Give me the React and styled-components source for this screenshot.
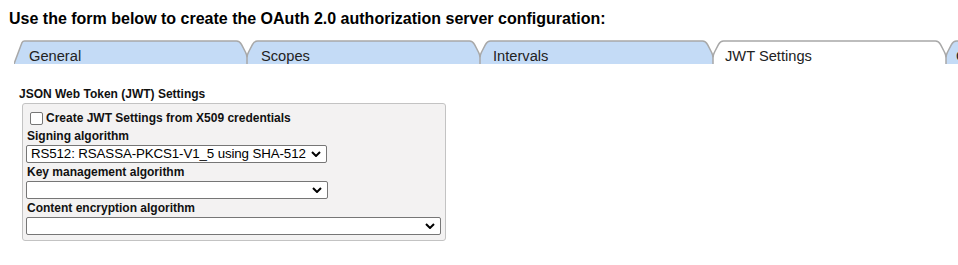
import React from "react";
import styled, { createGlobalStyle } from "styled-components";

const GlobalStyle = createGlobalStyle`
  html, body {
    margin: 0;
    padding: 0;
    background: #fff;
  }
  body {
    font-family: "Liberation Sans", Arial, sans-serif;
    color: #000;
  }
`;

const Page = styled.div`
  width: 958px;
  height: 265px;
  overflow: hidden;
  padding-top: 9px;
  box-sizing: border-box;
`;

const Heading = styled.h1`
  margin: 0 0 0 9px;
  font-size: 16px;
  line-height: 20px;
  font-weight: bold;
  color: #000;
  white-space: nowrap;
`;

const TabStrip = styled.div`
  display: flex;
  margin: 11px 0 0 14px;
  height: 24px;
`;

const Tab = styled.div`
  position: relative;
  flex: none;
  width: 233px;
  height: 24px;
  box-sizing: border-box;
  padding: 8px 0 0 ${(p) => p.$inset}px;
  overflow: hidden;
  z-index: ${(p) => (p.$active ? 2 : 1)};
  font-size: 14.67px;
  line-height: 16px;
  color: #222;
  white-space: nowrap;
`;

const TabShape = styled.svg`
  position: absolute;
  left: 0;
  top: 0;
  width: 233px;
  height: 24px;
  overflow: visible;
`;

const TabLabel = styled.span`
  position: relative;
`;

const Section = styled.section`
  margin: 23px 0 0 19px;
`;

const SectionTitle = styled.div`
  font-size: 12px;
  font-weight: bold;
  line-height: 14px;
  color: #111;
`;

const Box = styled.div`
  margin: 2px 0 0 3px;
  width: 424px;
  box-sizing: border-box;
  background: #f3f2f2;
  border: 1px solid #c3c3c3;
  border-radius: 3px;
  padding: 4px 4px 4px 3px;
`;

const CheckRow = styled.label`
  display: flex;
  align-items: center;
  height: 20px;
  font-size: 12px;
  font-weight: bold;
  color: #111;
`;

const Check = styled.input`
  appearance: none;
  width: 13px;
  height: 13px;
  margin: 0 3px 0 4px;
  border: 1px solid #767676;
  border-radius: 2px;
  background: #fff;
  box-sizing: border-box;
`;

const FieldLabel = styled.div`
  font-size: 12px;
  font-weight: bold;
  line-height: 17px;
  padding-left: 1px;
  color: #111;
`;

const SelectWrap = styled.div`
  position: relative;
  width: ${(p) => p.$width}px;
  height: 18px;
  margin-bottom: 1px;
`;

const Select = styled.select`
  appearance: none;
  display: block;
  width: 100%;
  height: 18px;
  box-sizing: border-box;
  margin: 0;
  padding: 0 12px 0 4px;
  border: 1px solid #767676;
  border-radius: 2px;
  background: #fff;
  font-family: "Liberation Sans", Arial, sans-serif;
  font-size: 13.33px;
  letter-spacing: -0.12px;
  line-height: 16px;
  color: #000;
  text-overflow: clip;
`;

const Chevron = styled.svg`
  position: absolute;
  right: 6px;
  top: 6px;
  width: 10px;
  height: 6px;
  pointer-events: none;
`;

function TabItem({ label, active, first, inset }) {
  const left = first
    ? "M0,24 L8,2.6 Q8.8,1 10.5,1"
    : "M0,24 L0,18 Q0,15 1.6,12 L5.4,4.6 Q7.4,1 10.5,1";
  const right = "L222.5,1 Q225.6,1 227.6,4.6 L231.4,12 Q233,15 233,18 L233,24";
  return (
    <Tab $active={active} $inset={inset}>
      <TabShape viewBox="0 0 233 24">
        <path d={`${left} ${right} Z`} fill={active ? "#ffffff" : "#c4dbf6"} />
        <path d={`${left} ${right}`} fill="none" stroke="#a8a8a8" strokeWidth="1.5" />
      </TabShape>
      <TabLabel>{label}</TabLabel>
    </Tab>
  );
}

function AlgoSelect({ width, value }) {
  return (
    <SelectWrap $width={width}>
      <Select defaultValue={value || ""}>
        <option value="">{""}</option>
        {value && <option value={value}>{value}</option>}
      </Select>
      <Chevron viewBox="0 0 10 6">
        <path d="M1,1 L5,5 L9,1" fill="none" stroke="#000" strokeWidth="2" />
      </Chevron>
    </SelectWrap>
  );
}

export default function App() {
  return (
    <Page>
      <GlobalStyle />
      <Heading>Use the form below to create the OAuth 2.0 authorization server configuration:</Heading>
      <TabStrip>
        <TabItem label="General" first inset={15} />
        <TabItem label="Scopes" inset={14} />
        <TabItem label="Intervals" inset={13} />
        <TabItem label="JWT Settings" active inset={12} />
        <TabItem label="Claims" inset={10} />
      </TabStrip>
      <Section>
        <SectionTitle>JSON Web Token (JWT) Settings</SectionTitle>
        <Box>
          <CheckRow>
            <Check type="checkbox" />
            Create JWT Settings from X509 credentials
          </CheckRow>
          <FieldLabel>Signing algorithm</FieldLabel>
          <AlgoSelect width={301} value="RS512: RSASSA-PKCS1-V1_5 using SHA-512" />
          <FieldLabel>Key management algorithm</FieldLabel>
          <AlgoSelect width={302} />
          <FieldLabel>Content encryption algorithm</FieldLabel>
          <AlgoSelect width={415} />
        </Box>
      </Section>
    </Page>
  );
}
